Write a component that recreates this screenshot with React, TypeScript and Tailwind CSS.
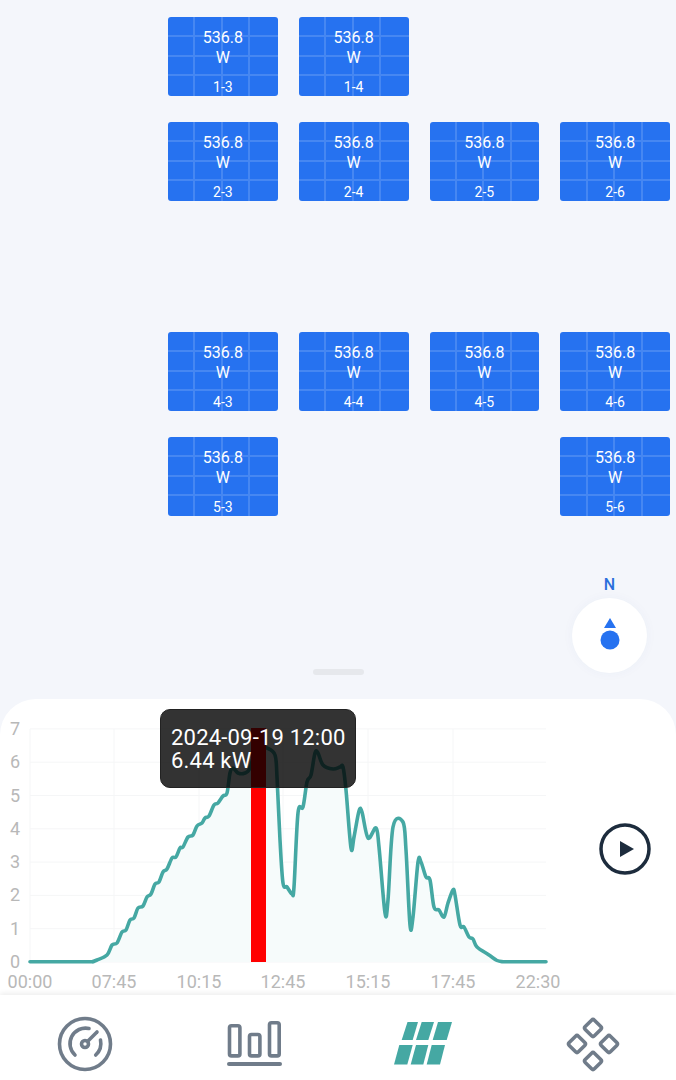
import { Fragment } from 'react';

const font = { fontFamily: 'Roboto, sans-serif' };

const rows = [
  ['1-3', '1-4', null, null],
  ['2-3', '2-4', '2-5', '2-6'],
  [null, null, null, null],
  ['4-3', '4-4', '4-5', '4-6'],
  ['5-3', null, null, '5-6'],
];

const curve: [number, number][] = [
  [30, 961.7], [88, 961.7], [92, 961.7], [97, 960], [107, 955], [112, 945], [117, 943], [122, 932], [126, 930], [130, 920], [134, 918],
  [138, 908], [143, 906], [147, 897], [151, 894], [155, 884], [159, 882], [163, 872], [167, 869], [172, 858], [176, 857],
  [180, 848], [183, 847], [188, 837], [193, 835], [197, 826], [202, 823], [205, 818], [209, 816], [214, 805], [218, 803],
  [223, 796], [227, 793], [230, 773], [233, 768], [238, 773], [245, 773], [250, 768], [257, 747], [267, 748], [275, 755],
  [277, 777], [280, 840], [283, 883], [287, 887], [292, 894], [294, 887], [298, 813], [303, 807], [307, 782], [311, 775],
  [315, 753], [318, 753], [323, 765], [333, 769], [340, 767], [343, 767], [346, 790], [351, 848], [354, 837], [359, 811],
  [362, 812], [368, 838], [376, 828], [379, 847], [385, 913], [388, 900], [393, 827], [403, 822], [406, 850], [410, 925],
  [413, 917], [418, 862], [421, 862], [426, 877], [430, 880], [434, 907], [439, 910], [444, 917], [448, 903], [453, 890],
  [455, 895], [460, 925], [464, 927], [469, 937], [473, 939], [477, 947], [489, 955], [497, 960.5], [503, 961.7], [510, 961.7], [546, 961.7],
];

// catmull-rom so the line is smooth like the echarts one
const smooth = (pts: [number, number][]) => {
  let d = `M${pts[0][0]} ${pts[0][1]}`;
  for (let i = 0; i < pts.length - 1; i++) {
    const p0 = pts[Math.max(i - 1, 0)];
    const p1 = pts[i];
    const p2 = pts[i + 1];
    const p3 = pts[Math.min(i + 2, pts.length - 1)];
    const c1 = [p1[0] + (p2[0] - p0[0]) / 6, p1[1] + (p2[1] - p0[1]) / 6];
    const c2 = [p2[0] - (p3[0] - p1[0]) / 6, p2[1] - (p3[1] - p1[1]) / 6];
    d += `C${c1[0]} ${c1[1]} ${c2[0]} ${c2[1]} ${p2[0]} ${p2[1]}`;
  }
  return d;
};

const line = smooth(curve);

const SolarPanel = ({ id }: { id: string }) => (
  <div className="relative h-[79px] bg-[#2672f0] rounded-[3px] overflow-hidden text-white text-center">
    <div className="absolute inset-0 grid grid-cols-4 grid-rows-4">
      {Array.from({ length: 16 }).map((_, i) => (
        <div
          key={i}
          className="border-r-2 border-b-2 border-white/15 [&:nth-child(4n)]:border-r-0 [&:nth-child(n+13)]:border-b-0"
        />
      ))}
    </div>
    <div className="relative pt-[11px] text-[16px] leading-[20px]">
      536.8
      <br />
      W
    </div>
    <div className="absolute bottom-0 inset-x-0 text-[14px] leading-[18px]">{id}</div>
  </div>
);

const PanelGrid = () => (
  <div className="ml-[168px] mr-[6px] grid grid-cols-4 gap-x-[21px] gap-y-[26px]">
    {rows.map((row, r) => (
      <Fragment key={r}>
        {row.map((id, c) => (id ? <SolarPanel key={c} id={id} /> : <div key={c} className="h-[79px]" />))}
      </Fragment>
    ))}
  </div>
);

const Chart = () => (
  <svg viewBox="0 699 566 296" className="w-[566px] h-[296px] shrink-0" style={font}>
    {[0, 1, 2, 3, 4, 5, 6, 7].map((v) => (
      <g key={v}>
        <line x1="30" x2="546" y1={962 - v * 33.3} y2={962 - v * 33.3} stroke="#f5f6f7" />
        <text x="15" y={968 - v * 33.3} fontSize="18" fill="#b8b8b8" textAnchor="middle">
          {v}
        </text>
      </g>
    ))}
    {[
      [30, '00:00'],
      [114, '07:45'],
      [199, '10:15'],
      [283, '12:45'],
      [368, '15:15'],
      [453, '17:45'],
      [538, '22:30'],
    ].map(([x, t]) => (
      <g key={t}>
        {x !== 538 && <line x1={x} x2={x} y1="729" y2="962" stroke="#f5f6f7" />}
        <text x={x} y="988" fontSize="18" fill="#b8b8b8" textAnchor="middle">
          {t}
        </text>
      </g>
    ))}
    <path d={`${line}L546 962L30 962Z`} fill="#f6fbfb" />
    <path d={line} fill="none" stroke="#45a8a3" strokeWidth="3.6" strokeLinejoin="round" strokeLinecap="round" />
    <rect x="251" y="728" width="15" height="234" fill="#ff0000" />
  </svg>
);

const GaugeIcon = () => (
  <svg width="56" height="56" viewBox="0 0 56 56" fill="none" stroke="#707c8a" strokeWidth="3.6" strokeLinecap="round">
    <circle cx="28" cy="28" r="25.5" />
    <path d="M18 39a15.500 15.500 0 0 1 14-26.500" />
    <path d="M43.500 24a16 16 0 0 1-4.800 15" />
    <circle cx="28" cy="28" r="3.500" />
    <path d="M31 25l9-9" />
  </svg>
);

const BarsIcon = () => (
  <svg width="56" height="56" viewBox="0 0 56 56" fill="none" stroke="#707c8a" strokeWidth="3.6" strokeLinecap="round">
    <rect x="3.500" y="9.800" width="10.400" height="30.100" rx="2" />
    <rect x="23.500" y="18.500" width="10.400" height="21.400" rx="2" />
    <rect x="43.500" y="6.800" width="9.700" height="33.100" rx="2" />
    <path d="M3 48h51" strokeWidth="4" />
  </svg>
);

const PanelsIcon = () => (
  <svg width="58" height="43" viewBox="0 0 58 43" fill="#45a8a3">
    <path d="M13.500 0H24l-5.300 18h-11z" />
    <path d="M27.700 0H40l-5.700 18H22z" />
    <path d="M44 0h14l-5.300 18h-14z" />
    <path d="M5.300 23h13.400l-5.400 19.500H0z" />
    <path d="M22 23h12.300l-5 19.500H16.700z" />
    <path d="M37.700 23H51l-5 19.500H32.700z" />
  </svg>
);

const DiamondsIcon = () => (
  <svg width="56" height="56" viewBox="0 0 56 56" fill="none" stroke="#707c8a" strokeWidth="3.6" strokeLinejoin="round">
    <rect x="21.500" y="5.500" width="13" height="13" rx="2" transform="rotate(45 28 12)" />
    <rect x="5.500" y="21.500" width="13" height="13" rx="2" transform="rotate(45 12 28)" />
    <rect x="37.500" y="21.500" width="13" height="13" rx="2" transform="rotate(45 44 28)" />
    <rect x="21.500" y="38.500" width="13" height="13" rx="2" transform="rotate(45 28 45)" />
  </svg>
);

export default function App() {
  return (
    <div className="w-[676px] h-[1080px] bg-[#f4f6fb] flex flex-col overflow-hidden" style={font}>
      {/* Panel layout */}
      <section className="h-[699px] pt-[17px] shrink-0">
        <PanelGrid />
        <div className="mt-[59px] mr-[29px] ml-auto w-[75px] flex flex-col items-center">
          <span className="text-[#2a6fdc] text-[16px] leading-[20px] font-medium">N</span>
          <div className="mt-[3px] w-[75px] h-[75px] rounded-full bg-white shadow-[0_0_12px_rgba(40,80,160,0.04)] flex items-center justify-center">
            <svg width="20" height="32" viewBox="0 0 20 32" className="mb-[3px]">
              <path d="M10 0l6 10H4z" fill="#2672f0" />
              <circle cx="10" cy="22" r="9.500" fill="#2672f0" />
            </svg>
          </div>
        </div>
        <div className="mt-[-4px] mx-auto w-[51px] h-[6px] rounded-full bg-[#e6e8ec]" />
      </section>

      {/* Power curve */}
      <section className="relative h-[296px] shrink-0 bg-white rounded-t-[36px] flex items-start">
        <Chart />
        <div className="mt-[124px] ml-[33px]">
          <svg width="52" height="52" viewBox="0 0 52 52">
            <circle cx="26" cy="26" r="24" fill="none" stroke="#1d2c3d" strokeWidth="3.500" />
            <path d="M21 18l14 8-14 8z" fill="#1d2c3d" />
          </svg>
        </div>
        <div className="absolute left-[160px] top-[10px] w-[196px] h-[79px] rounded-[10px] bg-black/80 border border-[#222] text-white text-[22px] leading-[23px] pl-[10px] pt-[16px] tracking-[0.2px]">
          2024-09-19 12:00
          <br />
          6.44 kW
        </div>
      </section>

      {/* Tab bar */}
      <nav className="relative flex-1 bg-white shadow-[0_-2px_5px_rgba(0,0,0,0.07)]">
        <div className="h-full grid grid-cols-4 items-center pt-[12px]">
          <div className="flex justify-center"><GaugeIcon /></div>
          <div className="flex justify-center"><BarsIcon /></div>
          <div className="flex justify-center"><PanelsIcon /></div>
          <div className="flex justify-center pl-[3px]"><DiamondsIcon /></div>
        </div>
      </nav>
    </div>
  );
}
